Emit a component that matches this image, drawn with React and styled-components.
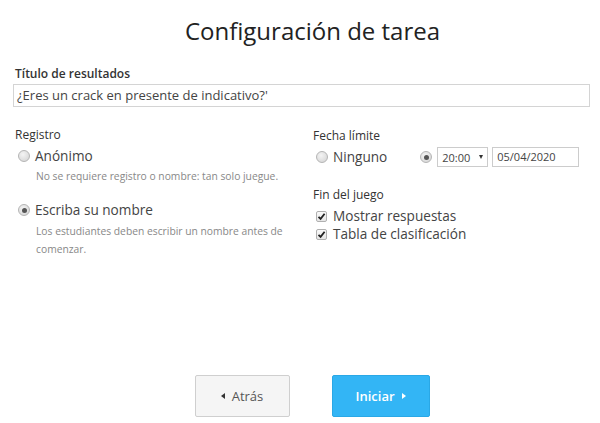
import React from "react";
import styled, { createGlobalStyle } from "styled-components";

const Global = createGlobalStyle`
  html, body { margin: 0; padding: 0; background: #fff; }
  body { font-family: "Open Sans", "Noto Sans", sans-serif; color: #333; }
  * { box-sizing: border-box; }
`;

const Page = styled.div`
  width: 600px;
  height: 423px;
  padding: 0 10px 0 13px;
  display: flex;
  flex-direction: column;
`;

const Title = styled.h1`
  margin: 15px 0 0 22px;
  font-size: 24px;
  font-weight: 400;
  line-height: 32px;
  text-align: center;
  color: #222;
`;

const FieldLabel = styled.div`
  margin: 19px 0 0 2px;
  font-size: 12px;
  font-weight: 600;
  line-height: 16px;
  color: #333;
`;

const TextBox = styled.div`
  margin-top: 2px;
  height: 23px;
  border: 1px solid #d4d4d4;
  padding: 0 3px;
  font-size: 13px;
  line-height: 21px;
  color: #444;
`;

const Columns = styled.div`
  display: grid;
  grid-template-columns: 298px 1fr;
  margin-top: 20px;
  padding-left: 2px;
`;

const Column = styled.div`
  display: flex;
  flex-direction: column;
`;

const SectionLabel = styled.div`
  font-size: 12px;
  line-height: 16px;
  color: #333;
  margin-top: ${(p) => p.$top || 0}px;
`;

const OptionRow = styled.label`
  display: flex;
  align-items: center;
  gap: ${(p) => p.$gap || 5}px;
  margin-top: ${(p) => p.$top || 0}px;
  padding-left: 3px;
  font-size: 13.6px;
  line-height: 18px;
  color: #444;
`;

const Radio = styled.span`
  width: 12px;
  height: 12px;
  border-radius: 50%;
  border: 1px solid #b5b5b5;
  background: radial-gradient(circle at 40% 35%, #f4f4f4 0%, #dcdcdc 70%, #cfcfcf 100%);
  display: inline-flex;
  align-items: center;
  justify-content: center;
  flex: none;
  &::after {
    content: "";
    width: 5px;
    height: 5px;
    border-radius: 50%;
    background: #555;
    display: ${(p) => (p.$checked ? "block" : "none")};
  }
`;

const Help = styled.div`
  margin: ${(p) => p.$top || 0}px 0 0 21px;
  font-size: 10.3px;
  line-height: 18px;
  color: #888;
  max-width: 268px;
`;

const DateRow = styled.div`
  display: flex;
  align-items: center;
  margin-top: 3px;
`;

const Spacer = styled.div`
  width: ${(p) => p.$w}px;
  flex: none;
`;

const Select = styled.div`
  width: 51px;
  height: 20px;
  border: 1px solid #ccc;
  display: flex;
  align-items: center;
  justify-content: space-between;
  padding: 0 4px 0 4px;
  font-size: 11px;
  color: #444;
  margin-left: 5px;
`;

const Caret = styled.span`
  width: 0;
  height: 0;
  border-left: 2.5px solid transparent;
  border-right: 2.5px solid transparent;
  border-top: 4px solid #333;
`;

const DateBox = styled.div`
  width: 87px;
  height: 20px;
  border: 1px solid #ccc;
  margin-left: 4px;
  padding: 0 4px;
  font-size: 11px;
  line-height: 18px;
  color: #444;
`;

const Check = styled.span`
  width: 11px;
  height: 11px;
  border: 1px solid #b0b0b0;
  border-radius: 2px;
  background: linear-gradient(#fafafa, #e6e6e6);
  display: inline-flex;
  align-items: center;
  justify-content: center;
  flex: none;
`;

const Footer = styled.div`
  margin-top: auto;
  margin-bottom: 6px;
  display: flex;
  justify-content: center;
  gap: 42px;
  padding-left: 21px;
`;

const Button = styled.button`
  width: ${(p) => (p.$primary ? 98 : 95)}px;
  height: 42px;
  border-radius: 2px;
  border: 1px solid ${(p) => (p.$primary ? "#2aa8e6" : "#cfcfcf")};
  background: ${(p) => (p.$primary ? "#33b5f5" : "#f5f5f5")};
  color: ${(p) => (p.$primary ? "#fff" : "#555")};
  font-family: "Open Sans", sans-serif;
  font-size: 13px;
  font-weight: ${(p) => (p.$primary ? 600 : 400)};
  display: flex;
  align-items: center;
  justify-content: center;
  gap: 7px;
  padding: 0;
`;

const Tri = styled.span`
  width: 0;
  height: 0;
  border-top: 3.5px solid transparent;
  border-bottom: 3.5px solid transparent;
  ${(p) =>
    p.$right
      ? `border-left: 4px solid ${p.$color};`
      : `border-right: 4px solid ${p.$color};`}
`;

const CheckMark = () => (
  <svg width="9" height="9" viewBox="0 0 9 9">
    <path d="M1.5 4.8 L3.6 6.9 L7.6 1.8" fill="none" stroke="#222" strokeWidth="1.8" />
  </svg>
);

export default function App() {
  return (
    <Page>
      <Global />
      <Title>Configuración de tarea</Title>
      <FieldLabel>Título de resultados</FieldLabel>
      <TextBox>¿Eres un crack en presente de indicativo?'</TextBox>
      <Columns>
        <Column>
          <SectionLabel>Registro</SectionLabel>
          <OptionRow $top={4}>
            <Radio />
            Anónimo
          </OptionRow>
          <Help $top={2}>No se requiere registro o nombre: tan solo juegue.</Help>
          <OptionRow $top={16}>
            <Radio $checked />
            Escriba su nombre
          </OptionRow>
          <Help $top={3}>Los estudiantes deben escribir un nombre antes de comenzar.</Help>
        </Column>
        <Column>
          <SectionLabel $top={1}>Fecha límite</SectionLabel>
          <DateRow>
            <OptionRow>
              <Radio />
              Ninguno
            </OptionRow>
            <Spacer $w={33} />
            <Radio $checked />
            <Select>
              20:00
              <Caret />
            </Select>
            <DateBox>05/04/2020</DateBox>
          </DateRow>
          <SectionLabel $top={20}>Fin del juego</SectionLabel>
          <OptionRow $top={4} $gap={6}>
            <Check>
              <CheckMark />
            </Check>
            Mostrar respuestas
          </OptionRow>
          <OptionRow $gap={6}>
            <Check>
              <CheckMark />
            </Check>
            Tabla de clasificación
          </OptionRow>
        </Column>
      </Columns>
      <Footer>
        <Button>
          <Tri $color="#333" />
          Atrás
        </Button>
        <Button $primary>
          Iniciar
          <Tri $right $color="#fff" />
        </Button>
      </Footer>
    </Page>
  );
}
